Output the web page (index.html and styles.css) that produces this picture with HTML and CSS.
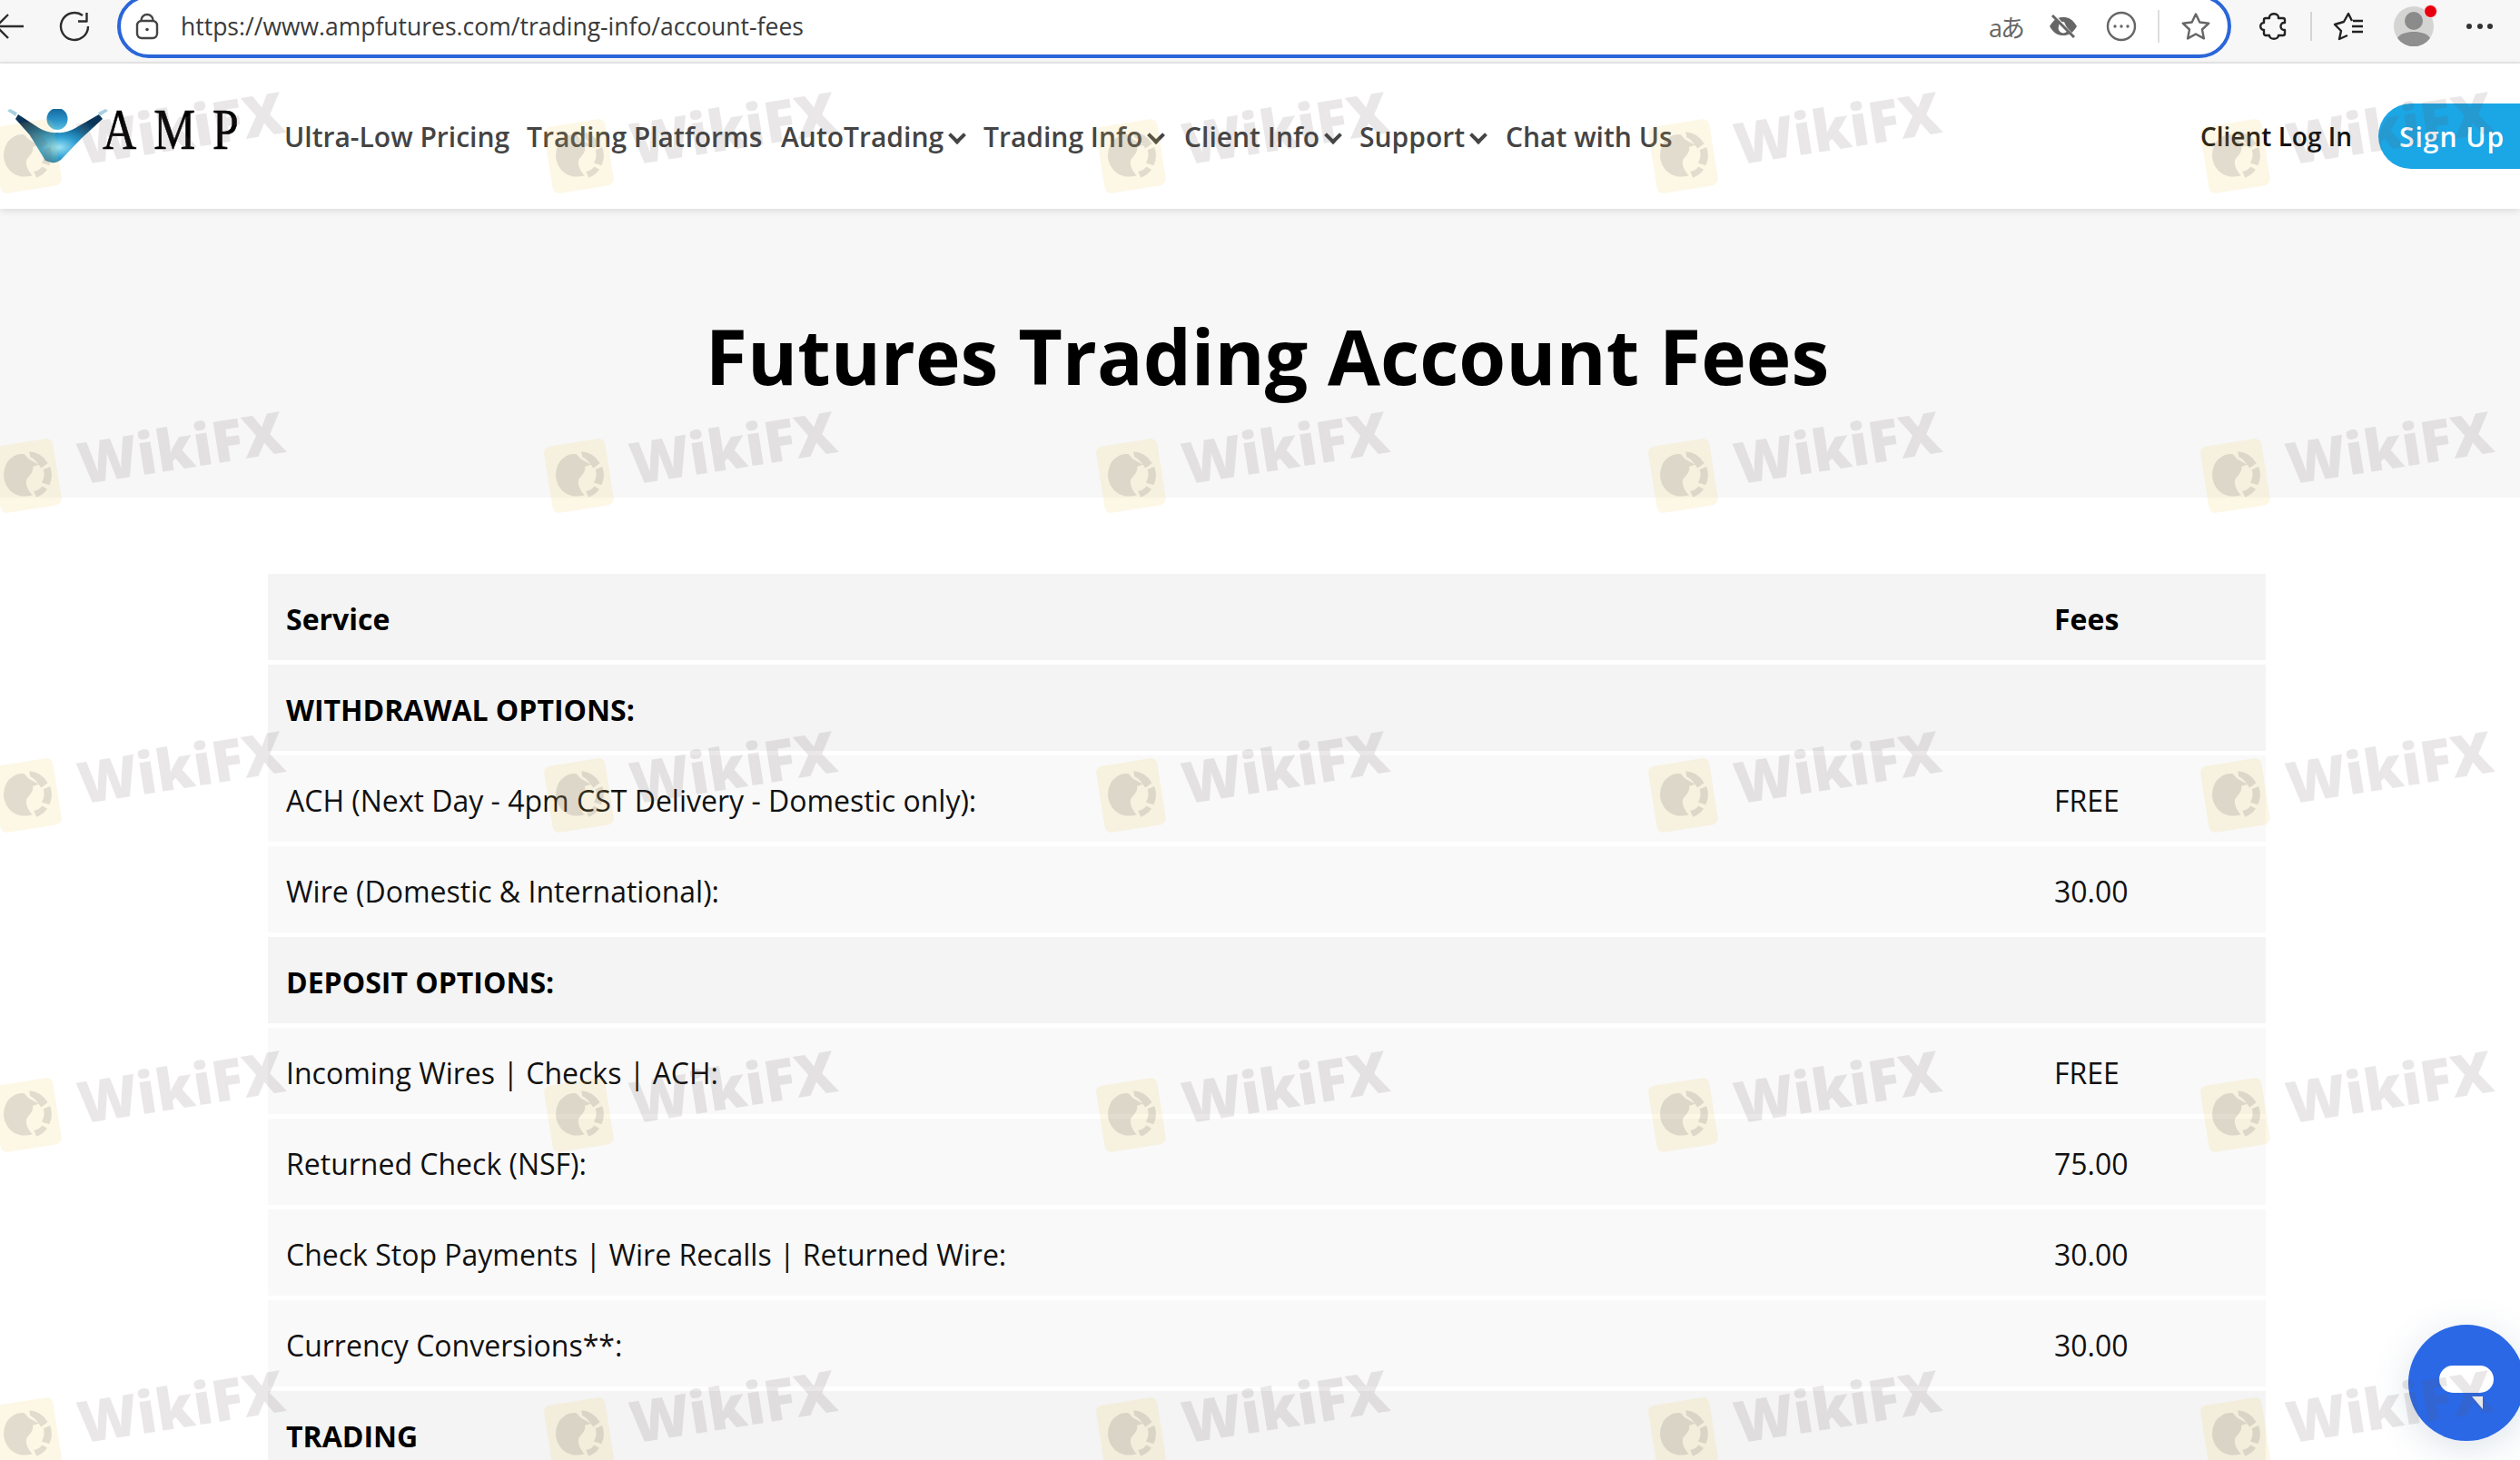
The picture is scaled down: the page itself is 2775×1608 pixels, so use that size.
FILE: index.html
```html
<!DOCTYPE html>
<html lang="en">
<head>
<meta charset="utf-8">
<title>Futures Trading Account Fees</title>
<link rel="stylesheet" href="styles.css">
</head>
<body>
<svg class="defs" width="0" height="0" aria-hidden="true">
  <defs>
    <symbol id="wfx" viewBox="0 0 70 76">
      <rect x="1" y="1" width="68" height="74" rx="7" fill="#f0c040" fill-opacity=".13"/>
      <g fill="#7a7470" fill-opacity=".2">
        <path d="M16 20C22 14 30 12 36 14L40 20 50 28 43 29C44 34 38 38 34 42 32 48 34 54 38 60 24 62 12 54 10 40 9 32 12 25 16 20z"/>
        <path d="M42 12A26 26 0 0 1 60 28L52 32C49 26 46 20 42 18z"/>
        <path d="M62 32A26 26 0 0 1 58 52L50 48C54 43 55 38 54 34z"/>
        <path d="M55 56A26 26 0 0 1 42 63L40 56C44 56 48 54 50 52z"/>
      </g>
    </symbol>
  </defs>
</svg>

<header class="toolbar">
  <svg class="ic back" viewBox="0 0 26 30"><path d="M26 15H-4M9 2-4 15 9 28"/></svg>
  <svg class="ic reload" viewBox="0 0 34 34"><path d="M32 17A15 15 0 1 1 26 5M30.500 2v9.500H21"/></svg>
  <div class="omnibox">
    <svg class="ic lock" viewBox="0 0 24 28"><rect x="1" y="8" width="22" height="19" rx="5"/><path d="M5.500 8V7a6.500 6 0 0 1 13 0v1"/><circle cx="12" cy="17.500" r="1.800" class="solid"/></svg>
    <span class="url">https://www.ampfutures.com/trading-info/account-fees</span>
    <span class="translate">aあ</span>
    <svg class="ic eye" viewBox="0 0 30 26"><path d="M0 13C5 5 9 3 15 3s10 2 15 10c-5 8-9 10-15 10S5 21 0 13z" class="fill"/><path d="M10 13a5 5 0 0 1 6-5l4 9a5 5 0 0 1-10-4z" class="hole"/><path d="M5 1l22 24" class="gap"/><path d="M3 1l24 24" class="slash"/></svg>
    <svg class="ic more" viewBox="0 0 32 32"><circle cx="16" cy="16" r="15"/><circle cx="9" cy="16" r="1.700" class="solid"/><circle cx="16" cy="16" r="1.700" class="solid"/><circle cx="23" cy="16" r="1.700" class="solid"/></svg>
    <i class="sep"></i>
    <svg class="ic star" viewBox="0 0 32 30"><path d="M16 1.500l4.300 9 10 1.200-7.300 6.800 1.900 9.900-8.900-4.900-8.900 4.900 1.900-9.900-7.300-6.800 10-1.200z"/></svg>
  </div>
  <svg class="ic puzzle" viewBox="0 0 28 32"><path d="M9 6C9 1 19 1 19 6v1h5a2 2 0 0 1 2 2v3c-6-1-6 9 0 8v4a2 2 0 0 1-2 2h-5c0 5-10 5-10 0H5a2 2 0 0 1-2-2v-4c-5 0-5-8 0-8V9a2 2 0 0 1 2-2h4z"/></svg>
  <i class="sep sep-dark"></i>
  <svg class="ic favs" viewBox="0 0 32 30"><path d="M20 9 16 1l-5 9-10 3 7 7-2 9 9-4"/><path d="M21 9h11M20 15h12M20 21h12"/></svg>
  <div class="avatar">
    <svg viewBox="0 0 44 44"><circle cx="22" cy="22" r="22" fill="#d4d4d2"/><circle cx="22" cy="16" r="10" fill="#8b8b8b"/><path d="M4 35c3-5 10-7 18-7s15 2 18 7a22 22 0 0 1-36 0z" fill="#8f8f8f"/></svg>
    <span class="dot"></span>
  </div>
  <div class="dots"><i></i><i></i><i></i></div>
</header>

<nav class="site-nav">
  <a class="brand" href="#">
    <svg class="brand-mark" viewBox="0 0 113 60">
      <defs>
        <radialGradient id="am" cx="50%" cy="68%" r="62%">
          <stop offset="0" stop-color="#9ae2f5"/>
          <stop offset=".35" stop-color="#2f9fd2"/>
          <stop offset=".7" stop-color="#13618f"/>
          <stop offset="1" stop-color="#0b3558"/>
        </radialGradient>
        <linearGradient id="hd" x1="0" y1="0" x2="0" y2="1">
          <stop offset="0" stop-color="#14669c"/>
          <stop offset=".55" stop-color="#2a93c8"/>
          <stop offset="1" stop-color="#5cc0e4"/>
        </linearGradient>
      </defs>
      <path d="M13 6 36 21Q46 27 56 26 66 27 76 21L102 6 106 11 83 32 60 56Q54 60 50 59 46 58 43 57L26 29 10 11z" fill="url(#am)"/>
      <ellipse cx="56" cy="11" rx="11.500" ry="12" fill="url(#hd)"/>
      <path d="M1 2 4 0l8 4-2 4zM112 2l-3-2-8 4 2 4z" fill="#a9cfe0"/>
    </svg>
    <span class="brand-name">AMP</span>
  </a>
  <a class="nav-link n1" href="#">Ultra-Low Pricing</a>
  <a class="nav-link n2" href="#">Trading Platforms</a>
  <a class="nav-link n3 caret" href="#">AutoTrading</a>
  <a class="nav-link n4 caret" href="#">Trading Info</a>
  <a class="nav-link n5 caret" href="#">Client Info</a>
  <a class="nav-link n6 caret" href="#">Support</a>
  <a class="nav-link n7" href="#">Chat with Us</a>
  <a class="login" href="#">Client Log In</a>
  <a class="signup" href="#">Sign Up</a>
</nav>

<section class="hero">
  <h1>Futures Trading Account Fees</h1>
</section>

<main class="fees">
  <table>
    <tbody>
      <tr class="dark"><th class="col-a">Service</th><th>Fees</th></tr>
      <tr class="dark"><th class="col-a">WITHDRAWAL OPTIONS:</th><td></td></tr>
      <tr><td>ACH (Next Day - 4pm CST Delivery - Domestic only):</td><td>FREE</td></tr>
      <tr><td>Wire (Domestic &amp; International):</td><td>30.00</td></tr>
      <tr class="dark"><th class="col-a">DEPOSIT OPTIONS:</th><td></td></tr>
      <tr><td>Incoming Wires | Checks | ACH:</td><td>FREE</td></tr>
      <tr><td>Returned Check (NSF):</td><td>75.00</td></tr>
      <tr><td>Check Stop Payments | Wire Recalls | Returned Wire:</td><td>30.00</td></tr>
      <tr><td>Currency Conversions**:</td><td>30.00</td></tr>
      <tr class="dark"><th class="col-a">TRADING</th><td></td></tr>
    </tbody>
  </table>
</main>

<button class="chat" aria-label="Chat">
  <span class="bubble"></span>
  <span class="tail"></span>
</button>

<div class="watermarks" aria-hidden="true">
  <div class="mark"><svg><use href="#wfx"/></svg><span>WikiFX</span></div>
  <div class="mark"><svg><use href="#wfx"/></svg><span>WikiFX</span></div>
  <div class="mark"><svg><use href="#wfx"/></svg><span>WikiFX</span></div>
  <div class="mark"><svg><use href="#wfx"/></svg><span>WikiFX</span></div>
  <div class="mark"><svg><use href="#wfx"/></svg><span>WikiFX</span></div>
  <div class="mark"><svg><use href="#wfx"/></svg><span>WikiFX</span></div>
  <div class="mark"><svg><use href="#wfx"/></svg><span>WikiFX</span></div>
  <div class="mark"><svg><use href="#wfx"/></svg><span>WikiFX</span></div>
  <div class="mark"><svg><use href="#wfx"/></svg><span>WikiFX</span></div>
  <div class="mark"><svg><use href="#wfx"/></svg><span>WikiFX</span></div>
  <div class="mark"><svg><use href="#wfx"/></svg><span>WikiFX</span></div>
  <div class="mark"><svg><use href="#wfx"/></svg><span>WikiFX</span></div>
  <div class="mark"><svg><use href="#wfx"/></svg><span>WikiFX</span></div>
  <div class="mark"><svg><use href="#wfx"/></svg><span>WikiFX</span></div>
  <div class="mark"><svg><use href="#wfx"/></svg><span>WikiFX</span></div>
  <div class="mark"><svg><use href="#wfx"/></svg><span>WikiFX</span></div>
  <div class="mark"><svg><use href="#wfx"/></svg><span>WikiFX</span></div>
  <div class="mark"><svg><use href="#wfx"/></svg><span>WikiFX</span></div>
  <div class="mark"><svg><use href="#wfx"/></svg><span>WikiFX</span></div>
  <div class="mark"><svg><use href="#wfx"/></svg><span>WikiFX</span></div>
  <div class="mark"><svg><use href="#wfx"/></svg><span>WikiFX</span></div>
  <div class="mark"><svg><use href="#wfx"/></svg><span>WikiFX</span></div>
  <div class="mark"><svg><use href="#wfx"/></svg><span>WikiFX</span></div>
  <div class="mark"><svg><use href="#wfx"/></svg><span>WikiFX</span></div>
  <div class="mark"><svg><use href="#wfx"/></svg><span>WikiFX</span></div>
</div>
</body>
</html>
```
FILE: styles.css
```css
* { box-sizing: border-box; }
html, body { margin: 0; height: 1608px; overflow: hidden; background: #fff; }
body { position: relative; font-family: "Open Sans", "Liberation Sans", sans-serif; color: #000; }
.defs { position: absolute; }
a { text-decoration: none; color: inherit; }

/* Browser chrome */
.toolbar { height: 70px; padding-bottom: 10px; display: flex; align-items: center; background: #f7f7f7; border-bottom: 2px solid #e9e9e9; overflow: hidden; }
.ic { fill: none; stroke: #2c2c2c; stroke-width: 2.4; stroke-linejoin: round; flex: none; overflow: visible; }
.ic .solid { fill: #2c2c2c; stroke: none; }
.back { width: 26px; height: 30px; }
.reload { width: 34px; height: 34px; margin-left: 39px; }
.omnibox { width: 2328px; height: 70px; margin-left: 30px; padding: 0 19px 0 17px; flex: none; display: flex; align-items: center; background: #fff; border: 4px solid #2b66d9; border-radius: 35px; }
.lock { width: 24px; height: 28px; stroke: #444; }
.lock .solid { fill: #444; }
.url { margin-left: 25px; font-size: 26.5px; color: #3a3a3a; white-space: nowrap; flex: 1; }
.translate { width: 34px; font-family: "Open Sans", "Noto Sans CJK JP", sans-serif; font-size: 27px; color: #666; letter-spacing: -2px; white-space: nowrap; flex: none; transform: translateX(-2px); }
.eye { width: 30px; height: 26px; margin-left: 31px; }
.eye .fill { fill: #666; stroke: none; }
.eye .hole { fill: #fff; stroke: none; }
.eye .gap { stroke: #fff; stroke-width: 3; }
.eye .slash { stroke: #666; stroke-width: 3; }
.more { width: 32px; height: 32px; margin-left: 33px; stroke: #666; }
.more .solid { fill: #666; }
.sep { display: block; width: 2px; height: 36px; background: #ddd; margin-left: 24px; flex: none; }
.star { width: 32px; height: 30px; margin-left: 24px; stroke: #666; }
.puzzle { width: 28px; height: 32px; margin-left: 33px; stroke: #222; }
.sep-dark { height: 32px; background: #d5d5d5; margin-left: 26px; }
.favs { width: 32px; height: 30px; margin-left: 24px; stroke: #222; }
.avatar { position: relative; width: 44px; height: 44px; margin-left: 34px; flex: none; }
.avatar svg { display: block; width: 44px; height: 44px; }
.dot { position: absolute; top: -2px; right: -4px; width: 15px; height: 15px; border-radius: 50%; background: #e8000f; border: 1.5px solid #f4f4f4; }
.dots { display: flex; gap: 5.5px; margin-left: 36px; }
.dots i { width: 6px; height: 6px; border-radius: 50%; background: #333; }

/* Site navigation */
.site-nav { height: 160px; display: flex; align-items: center; background: #fff; box-shadow: 0 2px 8px rgba(0,0,0,.12); position: relative; }
.brand { display: flex; align-items: flex-start; width: 313px; height: 60px; padding-left: 7px; flex: none; }
.brand-mark { width: 113px; height: 60px; flex: none; }
.brand-name { font-family: "Liberation Serif", serif; font-size: 63px; line-height: 60px; letter-spacing: 23px; margin: -7px 0 0 -7px; color: #000; -webkit-text-stroke: .6px #000; transform: scaleX(.82); transform-origin: left center; }
.nav-link { font-size: 30px; font-weight: 600; color: #444; white-space: nowrap; flex: none; }
.n1 { width: 267px; }
.n2 { width: 280px; }
.n3 { width: 223px; }
.n4 { width: 221px; }
.n5 { width: 193px; }
.n6 { width: 161px; }
.n7 { width: 765px; }
.caret::after { content: ""; display: inline-block; width: 10px; height: 10px; margin: 0 0 6px 8px; border: solid #444; border-width: 0 4px 4px 0; transform: rotate(45deg); }
.login { font-size: 28px; font-weight: 600; color: #111; width: 196px; white-space: nowrap; flex: none; }
.signup { display: flex; align-items: center; height: 72px; width: 156px; padding-left: 23px; border-radius: 36px 0 0 36px; background: #1ba6e6; color: #fff; font-size: 30px; font-weight: 600; letter-spacing: 1px; white-space: nowrap; flex: none; }

/* Hero */
.hero { height: 318px; display: flex; justify-content: center; align-items: flex-start; background: #f7f7f7; padding-top: 97px; }
.hero h1 { margin: 0; font-size: 84px; line-height: 130px; font-weight: 700; color: #000; transform: translateX(8px); }

/* Table */
.fees { padding: 84px 280px 0 295px; }
table { width: 2200px; border-collapse: separate; border-spacing: 0; font-size: 32px; table-layout: fixed; }
tr { height: 100px; background: #f9f9f9; }
tr.dark { background: #f4f4f4; }
td, th { padding: 3px 20px 0; text-align: left; border-bottom: 5px solid #fff; font-weight: 400; color: #111; }
th { font-weight: 700; color: #000; }
td:first-child, th.col-a { width: 1947px; }

/* Chat launcher */
.chat { position: absolute; left: 2652px; top: 1459px; width: 128px; height: 128px; padding: 0; border: 0; border-radius: 50%; background: #2b68e6; box-shadow: 0 8px 40px rgba(60,100,140,.18); }
.bubble { position: absolute; left: 34px; top: 45px; width: 60px; height: 30px; border-radius: 15px; background: #fff; }
.tail { position: absolute; left: 70px; top: 79px; width: 12px; height: 14px; background: #fff; clip-path: polygon(0 0, 100% 0, 100% 100%); }

/* Watermark overlay */
.watermarks { position: absolute; left: -8px; top: 96px; display: grid; grid-template-columns: repeat(5, 608px); grid-auto-rows: 352px; pointer-events: none; }
.mark { display: flex; align-items: center; gap: 23px; width: 340px; height: 100px; transform: rotate(-9deg); white-space: nowrap; }
.mark svg { width: 70px; height: 76px; margin-top: 10px; flex: none; }
.mark span { font-size: 63.5px; line-height: 100px; font-weight: 800; color: rgba(100,85,85,.14); }
```
